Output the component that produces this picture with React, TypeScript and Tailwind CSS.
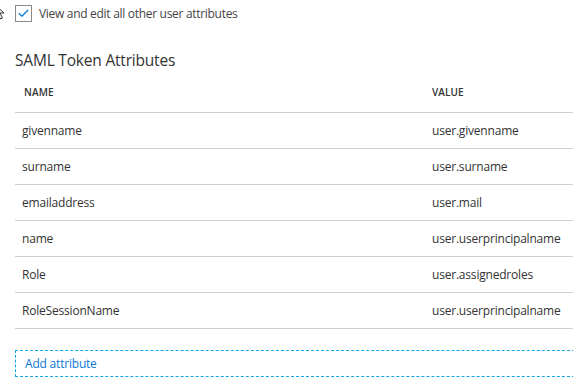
import { Check } from "lucide-react";

const ROWS = [
  { name: "givenname", value: "user.givenname" },
  { name: "surname", value: "user.surname" },
  { name: "emailaddress", value: "user.mail" },
  { name: "name", value: "user.userprincipalname" },
  { name: "Role", value: "user.assignedroles" },
  { name: "RoleSessionName", value: "user.userprincipalname" },
];

export default function App() {
  return (
    <div className="relative h-[380px] w-[573px] overflow-hidden bg-white text-[#333] [font-family:'Segoe_UI','Open_Sans',sans-serif]">
      {/* mouse cursor, clipped at the left edge */}
      <svg className="absolute left-[-6px] top-[4px]" width="12" height="16" viewBox="0 0 12 16">
        <path d="M1 1 L1 13 L4 10 L6.5 15 L8.5 14 L6 9 L10 9 Z" fill="white" stroke="#333" strokeWidth="1" />
      </svg>

      <div className="flex flex-col pl-[15px]">
        <label className="flex h-[27px] items-center gap-[7px]">
          <span className="flex h-[17px] w-[17px] items-center justify-center border border-[#8a8a8a] bg-white">
            <Check size={13} strokeWidth={2.2} className="text-[#0078d4]" />
          </span>
          <span className="text-[12px] tracking-[-0.3px] text-[#444]">View and edit all other user attributes</span>
        </label>

        <h2 className="mt-[20px] text-[15.5px] leading-[26px] tracking-[-0.2px] text-[#333]">SAML Token Attributes</h2>

        <div className="w-[580px]">
          <div className="flex h-[40px] items-center border-b border-[#cfcfcf] text-[10px] font-semibold tracking-[0.1px]">
            <div className="w-[417px] pl-[9px]">NAME</div>
            <div>VALUE</div>
          </div>
          {ROWS.map((r) => (
            <div key={r.name} className="flex h-[36px] items-center border-b border-[#cfcfcf] text-[12px] tracking-[-0.2px]">
              <div className="w-[417px] pl-[7px]">{r.name}</div>
              <div>{r.value}</div>
            </div>
          ))}
        </div>

        <button className="mt-[21px] flex h-[27px] w-[580px] items-center border border-dashed border-[#12a4e6] pl-[9px] text-left text-[12px] tracking-[-0.2px] text-[#0a78d6]">
          Add attribute
        </button>
      </div>
    </div>
  );
}
